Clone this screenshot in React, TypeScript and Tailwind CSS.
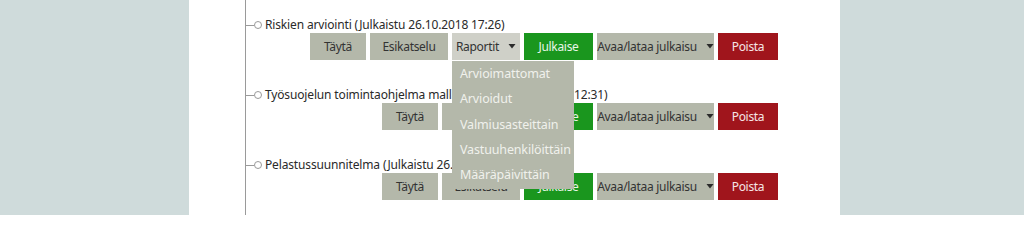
import React from "react";

function Caret() {
  return (
    <svg width="8" height="5" viewBox="0 0 8 5" className="ml-[9px] inline-block shrink-0">
      <path d="M0.5 0 L7.5 0 L4 4.5 Z" fill="#2b2b2b" />
    </svg>
  );
}

const greyBtn =
  "h-[27px] flex items-center justify-center bg-[#b4b8aa] text-[#333333] text-[12px] tracking-[-0.3px] whitespace-nowrap shrink-0";

function Item({ title, reports, open }: { title: string; reports?: boolean; open?: boolean }) {
  return (
    <div className="flex flex-col">
      <div className="h-[16px] flex items-center">
        <div className="w-[8px] h-px bg-[#9a9a9a]" />
        <div className="w-[8px] h-[8px] rounded-full border border-[#9a9a9a] bg-white" />
        <span className="ml-[3px] text-[12px] tracking-[-0.15px] text-[#2a2a2a] whitespace-nowrap">{title}</span>
      </div>
      <div className="flex justify-end gap-[4px] pr-[62px]">
        <div className={`${greyBtn} w-[56px]`}>Täytä</div>
        <div className={`${greyBtn} w-[78px]`}>Esikatselu</div>
        {reports && (
          <div className="relative shrink-0">
            <div className="h-[27px] w-[68px] flex items-center justify-center bg-[#cfd0c8] text-[#333333] text-[12px] tracking-[-0.3px] whitespace-nowrap">
              Raportit
              <Caret />
            </div>
            {open && (
              <div className="absolute left-0 top-full mt-[1px] w-[122px] bg-[#b4b8aa] py-[1px] z-10 flex flex-col">
                {["Arvioimattomat", "Arvioidut", "Valmiusasteittain", "Vastuuhenkilöittäin", "Määräpäivittäin"].map(
                  (t) => (
                    <div key={t} className="h-[25.2px] flex items-center pl-[8px] text-[12.5px] tracking-[-0.15px] text-[#f0f1ec] whitespace-nowrap">
                      {t}
                    </div>
                  )
                )}
              </div>
            )}
          </div>
        )}
        <div className="h-[27px] w-[69px] flex items-center justify-center bg-[#1a961e] text-[#e8f5e8] text-[12px] tracking-[-0.3px] shrink-0">
          Julkaise
        </div>
        <div className={`${greyBtn} w-[117px]`}>
          Avaa/lataa julkaisu
          <Caret />
        </div>
        <div className="h-[27px] w-[60px] flex items-center justify-center bg-[#a0151c] text-[#f5e5e5] text-[12px] tracking-[-0.3px] shrink-0">
          Poista
        </div>
      </div>
    </div>
  );
}

export default function App() {
  return (
    <div className="flex w-[1024px] h-[215px] overflow-hidden bg-[#cfdbdb]" style={{ fontFamily: '"Noto Sans", "Open Sans", sans-serif' }}>
      <div className="w-[189px] shrink-0" />
      <div className="w-[651px] shrink-0 bg-white h-full">
        <div className="ml-[56px] h-full border-l border-[#9a9a9a] pt-[17px] flex flex-col gap-[27px]">
          <Item title="Riskien arviointi (Julkaistu 26.10.2018 17:26)" reports open />
          <Item title="Työsuojelun toimintaohjelma malli (Julkaistu 26.10.2018 12:31)" />
          <Item title="Pelastussuunnitelma (Julkaistu 26.10.2018 12:31)" />
        </div>
      </div>
      <div className="flex-1" />
    </div>
  );
}
